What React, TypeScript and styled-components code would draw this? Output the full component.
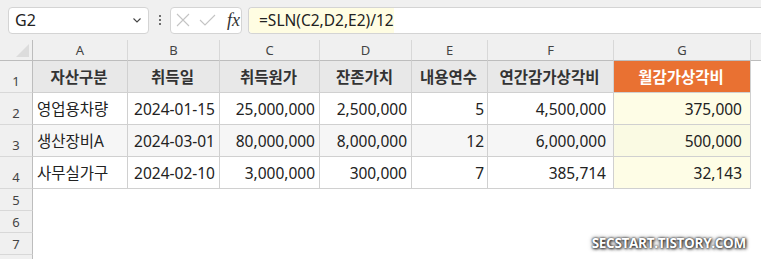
import React from "react";
import styled, { createGlobalStyle } from "styled-components";

const GlobalStyle = createGlobalStyle`
  html, body {
    margin: 0;
    padding: 0;
    background: #ffffff;
  }
  body {
    font-family: "Noto Sans", "Noto Sans CJK KR", sans-serif;
    color: #222;
  }
`;

const COLS = [33, 95, 92, 100, 92, 76, 126, 137];
const ROW_HEIGHTS = [32, 32, 32, 32, 22, 22, 22, 22];

const Page = styled.div`
  position: relative;
  width: 761px;
  height: 259px;
  overflow: hidden;
  background: #ffffff;
`;

const FormulaBar = styled.div`
  display: flex;
  align-items: center;
  height: 40px;
  padding-left: 8px;
  background: #f0f0f0;
  box-sizing: border-box;
`;

const NameBox = styled.div`
  display: flex;
  align-items: center;
  justify-content: space-between;
  width: 141px;
  height: 27px;
  box-sizing: border-box;
  padding: 0 5px 0 6px;
  background: #fff;
  border: 1px solid #d4d4d4;
  border-radius: 4px;
  font-size: 16px;
  color: #222;
`;

const Dots = styled.div`
  display: flex;
  flex-direction: column;
  gap: 2px;
  margin: 0 9px 0 10px;
  span {
    width: 2px;
    height: 2px;
    background: #444;
    border-radius: 1px;
  }
`;

const ActionBox = styled.div`
  display: flex;
  align-items: center;
  width: 72px;
  height: 27px;
  box-sizing: border-box;
  padding: 0 0 0 5px;
  background: #fff;
  border: 1px solid #d4d4d4;
  border-radius: 4px;
  svg + svg {
    margin-left: 9px;
  }
`;

const Fx = styled.span`
  font-family: "Liberation Serif", serif;
  font-style: italic;
  font-size: 18px;
  color: #333;
  margin-left: 11px;
`;

const FormulaInput = styled.div`
  flex: 1;
  display: flex;
  align-items: center;
  height: 27px;
  margin-left: 6px;
  box-sizing: border-box;
  background: #fff;
  border: 1px solid #d4d4d4;
  border-right: none;
  border-radius: 4px 0 0 4px;
  font-size: 15.5px;
  color: #222;
`;

const FormulaText = styled.span`
  display: flex;
  align-items: center;
  height: 100%;
  padding: 0 0 0 10px;
  background: #fffde2;
  border-radius: 4px 0 0 4px;
`;

const Sheet = styled.div`
  display: grid;
  grid-template-columns: ${COLS.map((c) => `${c}px`).join(" ")} 1fr;
  grid-template-rows: 21px ${ROW_HEIGHTS.map((r) => `${r}px`).join(" ")};
`;

const Corner = styled.div`
  position: relative;
  background: #f0f0f0;
  border-right: 1px solid #bdbdbd;
  border-bottom: 1px solid #bdbdbd;
  box-sizing: border-box;
  &::after {
    content: "";
    position: absolute;
    right: 3px;
    bottom: 3px;
    border-style: solid;
    border-width: 0 0 13px 13px;
    border-color: transparent transparent #dcdcdc transparent;
  }
`;

const ColHead = styled.div`
  display: flex;
  align-items: center;
  justify-content: center;
  background: #f0f0f0;
  border-right: 1px solid #d8d8d8;
  border-bottom: 1px solid #bdbdbd;
  box-sizing: border-box;
  font-size: 13px;
  color: #444;
`;

const ColHeadEnd = styled.div`
  background: #f0f0f0;
  border-bottom: 1px solid #bdbdbd;
`;

const RowHead = styled.div<{ $short?: boolean }>`
  display: flex;
  align-items: ${(p) => (p.$short ? "center" : "flex-end")};
  justify-content: center;
  padding-bottom: ${(p) => (p.$short ? "0" : "2px")};
  background: #f0f0f0;
  border-right: 1px solid #bdbdbd;
  border-bottom: 1px solid #d8d8d8;
  box-sizing: border-box;
  font-size: 13px;
  color: #444;
`;

type Tone = "head" | "accent" | "plain" | "band" | "hl" | "hlband";

const toneBg: Record<Tone, string> = {
  head: "#e8e8e8",
  accent: "#e97132",
  plain: "#ffffff",
  band: "#f6f6f6",
  hl: "#fefde6",
  hlband: "#fafae3",
};

const Cell = styled.div<{ $tone: Tone; $align: "left" | "center" | "right"; $pad?: number }>`
  display: flex;
  align-items: center;
  justify-content: ${(p) =>
    p.$align === "left" ? "flex-start" : p.$align === "center" ? "center" : "flex-end"};
  padding: 0 ${(p) => p.$pad ?? 4}px 0 ${(p) => (p.$align === "left" ? 4 : 2)}px;
  background: ${(p) => toneBg[p.$tone]};
  border-right: 1px solid #d0d0d0;
  border-bottom: 1px solid #d0d0d0;
  box-sizing: border-box;
  font-size: 15.5px;
  font-weight: ${(p) => (p.$tone === "head" || p.$tone === "accent" ? 600 : 400)};
  color: ${(p) => (p.$tone === "accent" ? "#ffffff" : p.$tone === "head" ? "#333" : "#222")};
  white-space: nowrap;
`;

const Blank = styled.div<{ $span?: number }>`
  grid-column: span ${(p) => p.$span ?? 1};
  background: #fff;
`;

const Watermark = styled.div`
  position: absolute;
  right: 15px;
  bottom: 7px;
  font-family: "Open Sans", "Noto Sans", sans-serif;
  font-size: 13.5px;
  font-weight: 700;
  letter-spacing: -0.3px;
  color: #ffffff;
  text-shadow: 0 0 2px #222, 1px 1px 3px #333, 0 0 4px #555;
`;

const header = ["자산구분", "취득일", "취득원가", "잔존가치", "내용연수", "연간감가상각비", "월감가상각비"];
const rows = [
  ["영업용차량", "2024-01-15", "25,000,000", "2,500,000", "5", "4,500,000", "375,000"],
  ["생산장비A", "2024-03-01", "80,000,000", "8,000,000", "12", "6,000,000", "500,000"],
  ["사무실가구", "2024-02-10", "3,000,000", "300,000", "7", "385,714", "32,143"],
];
const pads = [4, 4, 4, 4, 3, 7, 8];

const Chevron = () => (
  <svg width="12" height="12" viewBox="0 0 12 12" fill="none">
    <path d="M2.5 4.5 L6 8 L9.5 4.5" stroke="#444" strokeWidth="1.1" />
  </svg>
);

const CrossIcon = () => (
  <svg width="14" height="14" viewBox="0 0 14 14" fill="none">
    <path d="M1 1 L13 13 M13 1 L1 13" stroke="#c4c4c4" strokeWidth="1.1" />
  </svg>
);

const CheckIcon = () => (
  <svg width="17" height="14" viewBox="0 0 17 14" fill="none">
    <path d="M1 7 L6 12 L16 2" stroke="#c4c4c4" strokeWidth="1.1" />
  </svg>
);

const App = () => (
  <Page>
    <GlobalStyle />
    <FormulaBar>
      <NameBox>
        <span>G2</span>
        <Chevron />
      </NameBox>
      <Dots>
        <span />
        <span />
        <span />
      </Dots>
      <ActionBox>
        <CrossIcon />
        <CheckIcon />
        <Fx>fx</Fx>
      </ActionBox>
      <FormulaInput>
        <FormulaText>=SLN(C2,D2,E2)/12</FormulaText>
      </FormulaInput>
    </FormulaBar>
    <Sheet>
      <Corner />
      {["A", "B", "C", "D", "E", "F", "G"].map((l) => (
        <ColHead key={l}>{l}</ColHead>
      ))}
      <ColHeadEnd />

      <RowHead>1</RowHead>
      {header.map((h, i) => (
        <Cell key={h} $tone={i === 6 ? "accent" : "head"} $align="center">
          {h}
        </Cell>
      ))}
      <Blank />

      {rows.map((r, ri) => (
        <React.Fragment key={ri}>
          <RowHead>{ri + 2}</RowHead>
          {r.map((v, ci) => {
            const band = ri === 1;
            const tone: Tone = ci === 6 ? (band ? "hlband" : "hl") : band ? "band" : "plain";
            return (
              <Cell key={ci} $tone={tone} $align={ci === 0 ? "left" : "right"} $pad={pads[ci]}>
                {v}
              </Cell>
            );
          })}
          <Blank />
        </React.Fragment>
      ))}

      {[5, 6, 7].map((n) => (
        <React.Fragment key={n}>
          <RowHead $short>{n}</RowHead>
          <Blank $span={8} />
        </React.Fragment>
      ))}
      <RowHead $short />
      <Blank $span={8} />
    </Sheet>
    <Watermark>SECSTART.TISTORY.COM</Watermark>
  </Page>
);

export default App;
